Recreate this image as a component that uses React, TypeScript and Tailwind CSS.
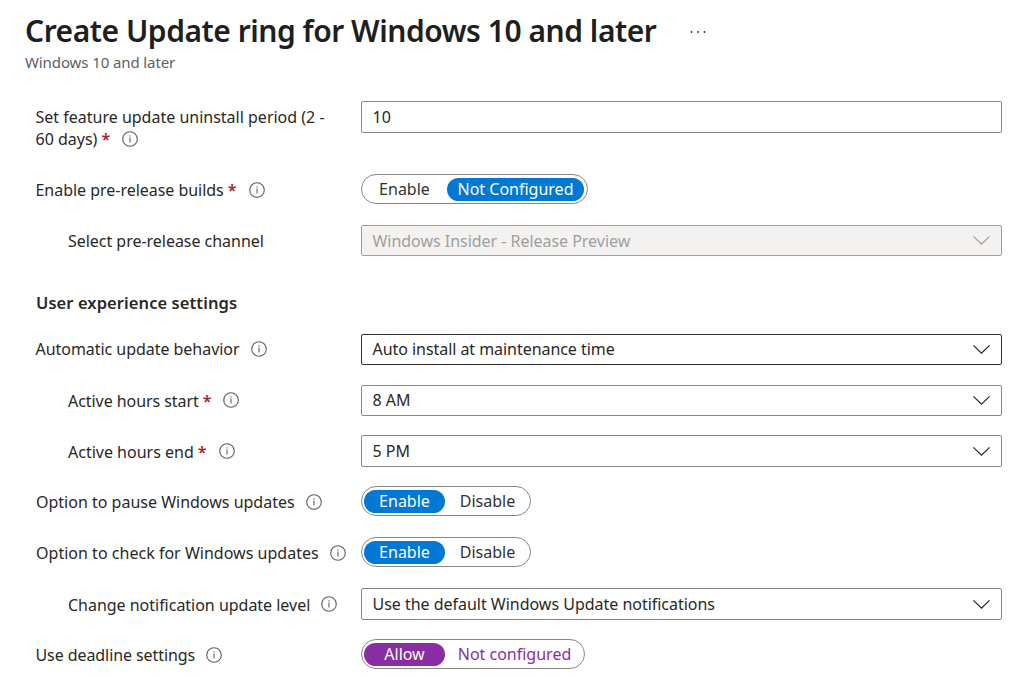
import type { ReactNode } from "react";

function InfoIcon({ className = "" }: { className?: string }) {
  return (
    <svg className={`inline-block shrink-0 ${className}`} width="16" height="16" viewBox="0 0 16 16" fill="none">
      <circle cx="8" cy="8" r="7.3" stroke="#605e5c" strokeWidth="1.1" />
      <path d="M8 6.5V11.6" stroke="#605e5c" strokeWidth="1.1" />
      <path d="M8 4.2V5.4" stroke="#605e5c" strokeWidth="1.1" />
    </svg>
  );
}

function Required() {
  return <span className="ml-1 font-semibold tracking-normal text-[#a4262c]">*</span>;
}

function Row({ label, height, children }: { label: ReactNode; height: string; children: ReactNode }) {
  return (
    <div className={`flex items-start ${height}`}>
      <div className="w-[325px] shrink-0">{label}</div>
      <div className="min-w-0 grow">{children}</div>
    </div>
  );
}

interface LabelProps {
  text: string;
  className: string;
  required?: boolean;
  info?: boolean;
  iconClass?: string;
}

function Label({ text, className, required, info = true, iconClass = "mt-[3px]" }: LabelProps) {
  return (
    <div className={`flex items-start whitespace-nowrap leading-[22px] ${className}`}>
      <span>{text}</span>
      {required && <Required />}
      {info && <InfoIcon className={`${required ? "ml-3" : "ml-[11px]"} ${iconClass}`} />}
    </div>
  );
}

function Select({ value, className, textClass = "" }: { value: string; className: string; textClass?: string }) {
  return (
    <div className={`flex items-center justify-between rounded-[2px] border pr-[11px] pl-[10.5px] whitespace-nowrap ${className}`}>
      <span className={textClass}>{value}</span>
      <svg width="17" height="9" viewBox="0 0 17 9" fill="none" stroke="currentColor" strokeWidth="1.2">
        <path d="M0.4 0.4L8.5 8.2L16.6 0.4" />
      </svg>
    </div>
  );
}

interface ToggleProps {
  options: [string, string];
  selected: 0 | 1;
  secondWidth: string;
  fill?: string;
  idle?: string;
}

function Toggle({ options, selected, secondWidth, fill = "bg-[#0078d4]", idle = "text-[#323130]" }: ToggleProps) {
  return (
    <div className="inline-flex h-[30px] gap-[2px] rounded-full border border-[#8a8886] px-[2px] pt-[3px] align-top leading-[22px]">
      {options.map((option, i) => (
        <div
          key={option}
          className={`h-[23px] rounded-full text-center whitespace-nowrap ${i === 0 ? "w-[81px]" : secondWidth} ${
            i === selected ? `${fill} text-white` : idle
          }`}
        >
          {option}
        </div>
      ))}
    </div>
  );
}

export default function App() {
  return (
    <div className="h-[690px] w-[1020px] overflow-hidden bg-white font-['Noto_Sans',sans-serif] text-[16px] text-[#292827]">
      <header className="h-[101px] pt-[13px] pl-[25px]">
        <div className="flex h-9 items-center">
          <h1 className="w-[665px] text-[30px] leading-9 font-semibold tracking-[-0.47px] whitespace-nowrap text-[#201f1e]">
            Create Update ring for Windows 10 and later
          </h1>
          <svg className="mt-px" width="16" height="4" viewBox="0 0 16 4" fill="#323130">
            <circle cx="1.5" cy="2" r="0.9" />
            <circle cx="8" cy="2" r="0.9" />
            <circle cx="14.5" cy="2" r="0.9" />
          </svg>
        </div>
        <p className="mt-[3px] text-[15px] leading-5 tracking-[-0.1px] text-[#605e5c]">Windows 10 and later</p>
      </header>

      <main className="pr-[18px] pl-9">
        <Row
          height="h-[73px]"
          label={
            <div className="-ml-[0.5px] pt-[5px] leading-[22px] whitespace-nowrap">
              <div>Set feature update uninstall period (2 -</div>
              <Label text="60 days)" className="" required />
            </div>
          }
        >
          <div className="flex h-8 items-center rounded-[2px] border border-[#8a8886] px-[10.5px]">10</div>
        </Row>
        <Row
          height="h-[51px]"
          label={<Label text="Enable pre-release builds" className="-ml-[0.5px] pt-[5px] tracking-[-0.03px]" required />}
        >
          <Toggle options={["Enable", "Not Configured"]} selected={1} secondWidth="w-[137px] mr-px" />
        </Row>
        <Row
          height="h-[51px]"
          label={<Label text="Select pre-release channel" className="pt-[5px] pl-8 tracking-[-0.03px]" info={false} />}
        >
          <Select
            value="Windows Insider - Release Preview"
            className="h-[31px] border-[#a19f9d] bg-[#f3f2f1] text-[#a19f9d]"
            textClass="tracking-[-0.03px]"
          />
        </Row>

        <h2 className="h-[58px] pt-4 text-[16.5px] leading-[22px] font-semibold tracking-[0.08px]">
          User experience settings
        </h2>

        <Row
          height="h-[51px]"
          label={<Label text="Automatic update behavior" className="-ml-[0.5px] pt-1 tracking-[-0.04px]" />}
        >
          <Select
            value="Auto install at maintenance time"
            className="h-[31px] border-[#323130]"
            textClass="pb-px leading-[22px] tracking-[-0.05px]"
          />
        </Row>
        <Row
          height="h-[50px]"
          label={
            <Label
              text="Active hours start"
              className="pt-[5px] pl-8 tracking-[-0.06px]"
              required
              iconClass="mt-[2px]"
            />
          }
        >
          <Select value="8 AM" className="h-[31px] border-[#8a8886]" textClass="pb-px leading-[22px]" />
        </Row>
        <Row
          height="h-[51px]"
          label={<Label text="Active hours end" className="pt-[6px] pl-8" required iconClass="mt-[2px]" />}
        >
          <Select value="5 PM" className="h-8 border-[#8a8886]" />
        </Row>
        <Row height="h-[51px]" label={<Label text="Option to pause Windows updates" className="pt-[5px]" />}>
          <Toggle options={["Enable", "Disable"]} selected={0} secondWidth="w-[81px]" />
        </Row>
        <Row
          height="h-[51px]"
          label={<Label text="Option to check for Windows updates" className="pt-[5px] tracking-[0.02px]" />}
        >
          <Toggle options={["Enable", "Disable"]} selected={0} secondWidth="w-[81px]" />
        </Row>
        <Row
          height="h-[51px]"
          label={
            <Label
              text="Change notification update level"
              className="pt-[6px] pl-8 tracking-[-0.02px]"
              iconClass="mt-[2px]"
            />
          }
        >
          <Select
            value="Use the default Windows Update notifications"
            className="h-8 border-[#8a8886]"
            textClass="tracking-[-0.02px]"
          />
        </Row>
        <Row
          height="h-[51px]"
          label={<Label text="Use deadline settings" className="-ml-[0.5px] pt-[5px] tracking-[-0.08px]" />}
        >
          <Toggle
            options={["Allow", "Not configured"]}
            selected={0}
            secondWidth="w-[135px]"
            fill="bg-[#8a2da5]"
            idle="text-[#8a2da5]"
          />
        </Row>
      </main>
    </div>
  );
}
